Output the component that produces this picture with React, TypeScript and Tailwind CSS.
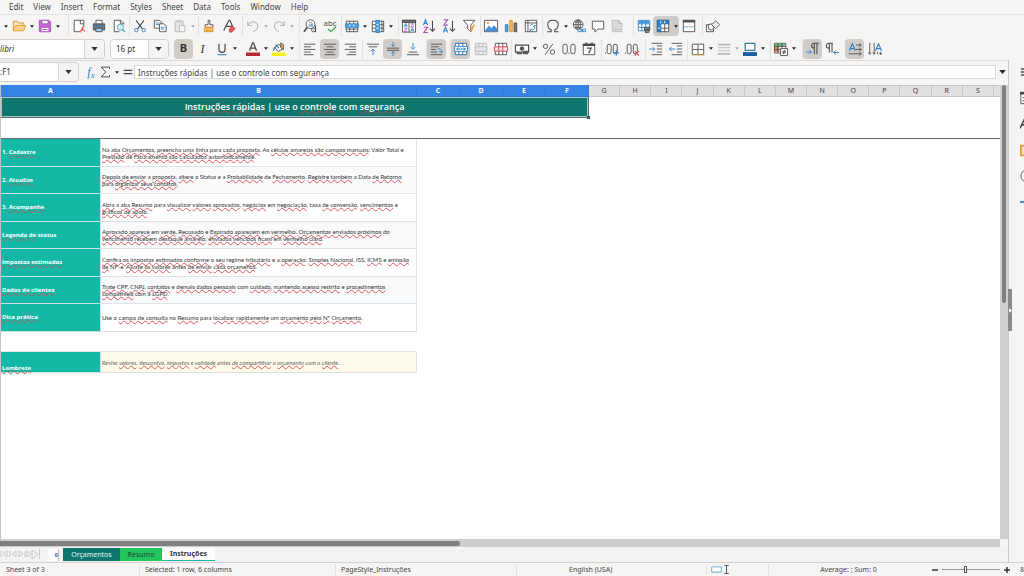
import type { ReactNode } from "react";

const INK = "#4a4a4a";
const BLUE = "#2f80c8";

type IconProps = { children: ReactNode; className?: string };

function Icon({ children, className = "size-[14px]" }: IconProps) {
  return (
    <svg
      viewBox="0 0 16 16"
      fill="none"
      stroke={INK}
      strokeWidth="1"
      className={`${className} shrink-0 overflow-visible`}
      aria-hidden="true"
    >
      {children}
    </svg>
  );
}

type ToolProps = {
  label: string;
  active?: boolean;
  faded?: boolean;
  menu?: boolean;
  children: ReactNode;
};

function Caret() {
  return (
    <svg viewBox="0 0 6 4" className="h-[3px] w-1" aria-hidden="true">
      <path d="M0 0h6L3 4z" fill="#222" />
    </svg>
  );
}

function Tool({ label, active, faded, menu, children }: ToolProps) {
  return (
    <span
      className={`flex h-5 shrink-0 items-center rounded-sm ${active ? "bg-[#d0ccc8]" : ""} ${
        faded ? "opacity-35" : ""
      }`}
    >
      <button type="button" aria-label={label} className="flex h-5 w-[19px] items-center justify-center">
        {children}
      </button>
      {menu ? (
        <button
          type="button"
          aria-label={`${label} options`}
          className="flex h-5 w-[7px] items-center justify-center"
        >
          <Caret />
        </button>
      ) : null}
    </span>
  );
}

function Group({ className, children }: { className: string; children: ReactNode }) {
  return (
    <div className={`flex h-5 shrink-0 items-center ${className}`}>
      {children}
    </div>
  );
}

type LettersProps = { text: string; x: number; y: number; size: number; color?: string };

function Letters({ text, x, y, size, color = INK }: LettersProps) {
  return (
    <text
      x={x}
      y={y}
      fontSize={size}
      fill={color}
      stroke="none"
      textAnchor="middle"
      fontFamily="'Noto Sans', sans-serif"
    >
      {text}
    </text>
  );
}

function StandardBar() {
  return (
    <div className="flex h-[23px] items-center overflow-hidden border-t border-[#e6e4e2] pl-[3px]">
      <Group className="w-[65px]">
        <span className="flex w-[6px] justify-center">
          <Caret />
        </span>
        <Tool label="Open" menu>
          <Icon>
            <path d="M1.500 13.500v-11h4.500l1.500 2h6v3" fill="#fbe3b5" stroke="#d99331" />
            <path d="M1.500 13.500l2.500-6h11.500l-2 6z" fill="#f9d08a" stroke="#e09a35" />
          </Icon>
        </Tool>
        <Tool label="Save" menu>
          <Icon>
            <path d="M1.500 1.500h11l2 2v11h-13z" fill="#c469cf" stroke="#a94fbd" />
            <path d="M4.500 1.500h7v4h-7zM3.500 9.500h9v5h-9z" fill="#fff" stroke="#a94fbd" />
            <path d="M5 12h6" stroke="#a94fbd" />
          </Icon>
        </Tool>
      </Group>
      <Group className="w-[61px] gap-px border-l border-[#e3e1df]">
        <Tool label="Export as PDF">
          <Icon>
            <path d="M13.500 9V1.500h-11v13h7" fill="#fff" />
            <path d="M9.500 1.500v4h4" />
            <path d="M12.500 8v4M9 15c2-1 3-4 2.500-5.500M9.500 12.500c2-.5 4 0 5.500 1.500" stroke="#dd5560" strokeWidth="1.300" />
          </Icon>
        </Tool>
        <Tool label="Print">
          <Icon>
            <path d="M4.500 5V1.500h7V5" fill="#fff" />
            <path d="M1.500 5.500h13v7h-13z" fill="#6b757e" />
            <path d="M3 8h10" stroke="#2f80c8" />
            <path d="M4.500 10.500h7v4h-7z" fill="#9ed0f2" />
          </Icon>
        </Tool>
        <Tool label="Print Preview">
          <Icon>
            <path d="M13.500 6V5L10 1.500H2.500v13h6M9.500 1.500v4h4" fill="#fff" />
            <circle cx="9.500" cy="9.500" r="3.500" fill="#d6f0f4" stroke="#51a8b5" />
            <path d="M12 12l3 3" stroke="#51a8b5" strokeWidth="1.500" />
          </Icon>
        </Tool>
      </Group>
      <Group className="w-[69px] gap-px border-l border-[#e3e1df]">
        <Tool label="Cut">
          <Icon>
            <path d="M3.500 1.500l7.500 10M12.500 1.500L5 11.500" strokeWidth="1.200" />
            <circle cx="3.800" cy="12.700" r="2" stroke={BLUE} />
            <circle cx="12.200" cy="12.700" r="2" stroke={BLUE} />
          </Icon>
        </Tool>
        <Tool label="Copy">
          <Icon>
            <path d="M1.500 1.500h6l2 2v7h-8z" fill="#fff" />
            <path d="M3 4.500h4M3 6.500h4" stroke={BLUE} />
            <path d="M7.500 5.500h5l2.500 2.500v6.500H7.500z" fill="#fff" />
            <path d="M9 9.500h4M9 11.500h4" stroke={BLUE} />
          </Icon>
        </Tool>
        <Tool label="Paste" faded menu>
          <Icon>
            <path d="M2.500 2.500h9v12h-9z" fill="#c9c7c5" />
            <path d="M5 1.500h4v2H5z" fill="#fff" />
            <path d="M7.500 7.500h6v7h-6z" fill="#fff" />
          </Icon>
        </Tool>
      </Group>
      <Group className="w-11 gap-px border-l border-[#e3e1df]">
        <Tool label="Clone Formatting">
          <Icon>
            <path d="M7 1.500h2v5h3.500v3h-9v-3H7z" fill="#fff" />
            <path d="M3.500 9.500h9v5h-10z" fill="#f6bd5d" stroke="#da922b" />
            <path d="M6 12v2.500M9 12v2.500" stroke="#da922b" />
          </Icon>
        </Tool>
        <Tool label="Clear Direct Formatting">
          <Icon>
            <path d="M2 13L8 1.500h1l3.500 8M4.500 8.500h7" strokeWidth="1.300" />
            <path d="M8 12l4-4 3 3-4 4H9z" fill="#e5525d" stroke="#d13d49" />
          </Icon>
        </Tool>
      </Group>
      <Group className="w-[57px] border-l border-[#e3e1df]">
        <Tool label="Undo" faded menu>
          <Icon>
            <path d="M2 2.500v5h5M2.500 7c2-4 6-5 9-2.500 3.500 3 2 8-3.500 10" strokeWidth="1.200" />
          </Icon>
        </Tool>
        <Tool label="Redo" faded menu>
          <Icon>
            <path d="M14 2.500v5H9M13.500 7c-2-4-6-5-9-2.500-3.500 3-2 8 3.500 10" strokeWidth="1.200" />
          </Icon>
        </Tool>
      </Group>
      <Group className="w-[42px] gap-px border-l border-[#e3e1df]">
        <Tool label="Find and Replace">
          <Icon>
            <circle cx="8.500" cy="6" r="5" fill="#fff" />
            <path d="M5 9.500l-4 5" strokeWidth="1.800" />
            <path d="M7 4.500c2.500-1.500 3.500 0 3.500 1.500v2.500M10.500 6.500c-3 0-4 .5-3.500 1.500.5 1 3 .5 3.500-.5" stroke={BLUE} />
            <circle cx="12" cy="12.500" r="2.200" fill="#f6f5f3" />
            <path d="M14.300 7.500V15" strokeWidth="1.200" />
          </Icon>
        </Tool>
        <Tool label="Spelling">
          <Icon>
            <Letters text="abc" x={8} y={8} size={9} />
            <path d="M6 11.500l3 3 6-6" stroke="#3aa757" strokeWidth="1.500" />
          </Icon>
        </Tool>
      </Group>
      <Group className="w-[57px] border-l border-[#e3e1df]">
        <Tool label="Row" menu>
          <Icon>
            <path d="M1.500 2.500h13v12h-13zM5.500 2.500v12M10 2.500v12M1.500 11.500h13" fill="#fff" />
            <path d="M.5 5.500h15v4H.5z" fill="#4b9fe0" stroke={BLUE} />
            <path d="M5.500 6v3M10 6v3" stroke="#fff" />
          </Icon>
        </Tool>
        <Tool label="Column" menu>
          <Icon>
            <path d="M1.500 2.500h13v12h-13zM1.500 6.500h13M1.500 10.500h13M12.500 2.500v12" fill="#fff" />
            <path d="M5.500 1.500h4v14h-4z" fill="#4b9fe0" stroke={BLUE} />
            <path d="M6 6.500h3M6 10.500h3" stroke="#fff" />
          </Icon>
        </Tool>
      </Group>
      <Group className="w-[82px] gap-px border-l border-[#e3e1df]">
        <Tool label="Sort">
          <Icon>
            <path d="M.5 1.500h15v13.500H.5zM8 4v11" fill="#fff" />
            <path d="M.5 1.500h15V4H.5z" fill="#777" />
            <path d="M2.500 9l1.800-4L6 9M3 7.800h2.600M10 14l1.800-4 1.700 4M10.500 12.800h2.600" stroke={BLUE} />
            <path d="M2.500 10.500h3.300l-3.300 3.500h3.500M10 5.500h3.300L10 9h3.500" stroke="#b14fc0" />
          </Icon>
        </Tool>
        <Tool label="Sort Ascending">
          <Icon>
            <path d="M1.500 7L4 .8 6.500 7M2.300 5h3.400" stroke={BLUE} strokeWidth="1.200" />
            <path d="M2 9.500h4.500L2 15.500h4.800" stroke="#b14fc0" strokeWidth="1.200" />
            <path d="M12 2v12M9 11l3 3 3-3" strokeWidth="1.200" />
          </Icon>
        </Tool>
        <Tool label="Sort Descending">
          <Icon>
            <path d="M2 1h4.500L2 7h4.800" stroke="#b14fc0" strokeWidth="1.200" />
            <path d="M1.500 15.500L4 9.300l2.500 6.200M2.300 13.500h3.400" stroke={BLUE} strokeWidth="1.200" />
            <path d="M12 2v12M9 11l3 3 3-3" strokeWidth="1.200" />
          </Icon>
        </Tool>
        <Tool label="AutoFilter">
          <Icon>
            <path d="M1.500 1.500h13L10 7v7.500L6.500 11V7z" fill="#fff" />
            <path d="M10 14.500l4-8" stroke="#eba23d" strokeWidth="2" />
          </Icon>
        </Tool>
      </Group>
      <Group className="w-[62px] gap-px border-l border-[#e3e1df]">
        <Tool label="Insert Image">
          <Icon>
            <path d="M.5 1.500h15v13H.5z" fill="#fff" />
            <path d="M1 13.500l4.500-6 3 3 3-3.500 3.500 4v3H1z" fill="#3f93d8" stroke="none" />
            <circle cx="4.500" cy="4.500" r="1.500" fill="#f3b04d" stroke="none" />
          </Icon>
        </Tool>
        <Tool label="Insert Chart">
          <Icon>
            <path d="M1.500 6.500h3v8h-3z" fill="#4b9fe0" stroke={BLUE} />
            <path d="M6.500 1.500h3v13h-3z" fill="#f5b85a" stroke="#da922b" />
            <path d="M11.500 4.500h3v10h-3z" fill="#777" />
          </Icon>
        </Tool>
        <Tool label="Pivot Table">
          <Icon>
            <path d="M1.500 1.500h13v13h-13zM1.500 4.500h13M4.500 1.500v13" fill="#fff" />
            <path d="M6.500 12.500h3c2 0 3-2 3-5M10.500 9l2-2 2 2M8.500 10.500l-2 2 2 2M7 8c0-1 1-2 3-2" stroke={BLUE} />
          </Icon>
        </Tool>
      </Group>
      <Group className="w-[91px] border-l border-[#e3e1df]">
        <Tool label="Special Character" menu>
          <Icon>
            <path d="M1.500 14.500H6v-2C3 11 2 9 2 6.500c0-3 2.500-5 6-5s6 2 6 5c0 2.500-1 4.500-4 6v2h4.500" strokeWidth="1.200" />
          </Icon>
        </Tool>
        <Tool label="Insert Hyperlink">
          <Icon>
            <circle cx="7" cy="6.500" r="5.500" fill="#fff" />
            <path d="M1.500 6.500h11M7 1v11M3 3.500h8M3 9.500h8" />
            <ellipse cx="7" cy="6.500" rx="2.500" ry="5.500" />
            <path d="M7 11.500h3.500v3H7zM12 11.500h3.500v3H12zM10 13h3" fill="#f6f5f3" stroke={BLUE} />
          </Icon>
        </Tool>
        <Tool label="Insert Comment">
          <Icon>
            <path d="M1.500 2.500h13v9H8L4.500 15v-3.500h-3z" fill="#fff" />
          </Icon>
        </Tool>
        <Tool label="Headers and Footers" faded>
          <Icon>
            <path d="M2.500 1.500H10L13.500 5v9.500h-11z" fill="#aaa" />
            <path d="M4 12h8M9.500 1.500V5h4" />
          </Icon>
        </Tool>
      </Group>
      <Group className="w-[69px] border-l border-[#e3e1df]">
        <Tool label="Define Print Area">
          <Icon>
            <path d="M1.500 1.500h13v12h-13z" fill="#fff" stroke={BLUE} />
            <path d="M2 2h12v3H2z" fill="#4b9fe0" stroke="none" />
            <path d="M1.500 5.500h13M1.500 9.500h13M5.500 1.500v12M10 1.500v12" stroke={BLUE} />
            <path d="M8.500 9.500h6v3h-6zM9.500 12.500h4v3h-4z" fill="#888" />
          </Icon>
        </Tool>
        <Tool label="Freeze Rows and Columns" active menu>
          <Icon>
            <path d="M1.500 1.500h13v13h-13zM5.500 10.500h9M10 5v9.500" fill="#fff" />
            <path d="M1.500 1.500h13v4h-9v9h-4z" fill="#2f80c8" stroke="#2369a8" />
            <path d="M5.500 2v3M10 2v3M2 10.500h3" stroke="#fff" />
          </Icon>
        </Tool>
        <Tool label="Split Window">
          <Icon>
            <path d="M1.500 1.500h13v13h-13z" fill="#fff" />
            <path d="M1 1h14v3H1z" fill="#555" stroke="none" />
            <path d="M2 9h12" stroke={BLUE} strokeDasharray="2 1" />
          </Icon>
        </Tool>
      </Group>
      <Group className="border-l border-[#e3e1df]">
        <Tool label="Show Draw Functions">
          <Icon>
            <path d="M.5 6.500h8v8h-8z" />
            <circle cx="6" cy="9" r="3.500" fill="#f6f5f3" />
            <path d="M11 2l4.500 4.500L11 11 6.500 6.500z" fill="#f6f5f3" />
          </Icon>
        </Tool>
      </Group>
    </div>
  );
}

type ComboProps = { label: string; value: string; box: string; text: string };

function Combo({ label, value, box, text }: ComboProps) {
  return (
    <div className={`flex h-5 shrink-0 overflow-hidden border border-[#d3d0cd] bg-white ${box}`}>
      <input
        aria-label={label}
        defaultValue={value}
        className={`min-w-0 flex-1 bg-white text-[#333] outline-none ${text}`}
      />
      <button
        type="button"
        aria-label={`${label} list`}
        className="flex w-5 items-center justify-center border-l border-[#d3d0cd] bg-[#f6f5f3]"
      >
        <svg viewBox="0 0 8 5" className="h-1 w-[7px]" aria-hidden="true">
          <path d="M0 0h8L4 5z" fill="#333" />
        </svg>
      </button>
    </div>
  );
}

function FormattingBar() {
  return (
    <div className="flex h-[23px] items-center overflow-hidden">
      <div className="flex w-[174px] shrink-0 gap-[5px]">
        <Combo label="Font Name" value="libri" box="w-[105px] rounded-r-sm border-l-0" text="text-[8px] italic" />
        <Combo label="Font Size" value="16 pt" box="w-[59px] rounded-sm" text="pl-[5px] text-[8px]" />
      </div>
      <Group className="w-[69px]">
        <Tool label="Bold" active>
          <span className="text-[11px] font-bold text-[#333]">B</span>
        </Tool>
        <Tool label="Italic">
          <span className="font-['Liberation_Serif',serif] text-[12px] italic text-[#333]">I</span>
        </Tool>
        <Tool label="Underline" menu>
          <Icon>
            <path d="M4.500 2v6c0 5 7 5 7 0V2" strokeWidth="1.400" />
            <path d="M3 14.500h10" stroke={BLUE} strokeWidth="1.200" />
          </Icon>
        </Tool>
      </Group>
      <Group className="w-14">
        <Tool label="Font Color" menu>
          <Icon>
            <path d="M4 10L7.500 1h1L12 10M5.500 7h5" strokeWidth="1.500" />
            <path d="M0 12h16v4H0z" fill="#b8292f" stroke="none" />
          </Icon>
        </Tool>
        <Tool label="Background Color" menu>
          <Icon>
            <path d="M3 6l5-3.500L12 8l-5 3z" fill="#fff" />
            <path d="M2 10c0-3 1-4 2-4M4 3l4 4" stroke={BLUE} strokeWidth="1.300" />
            <path d="M10 1v5l3 3V3z" fill="#f0b04f" />
            <path d="M0 12h16v4H0z" fill="#fbee21" stroke="none" />
          </Icon>
        </Tool>
      </Group>
      <Group className="w-[63px] gap-px border-l border-[#e3e1df]">
        <Tool label="Align Left">
          <Icon>
            <path d="M1 2.500h13M1 5.500h8M1 8.500h13M1 11.500h8M1 14.500h11" />
          </Icon>
        </Tool>
        <Tool label="Center Horizontally" active>
          <Icon>
            <path d="M1 2.500h14M4 5.500h8M1 8.500h14M4 11.500h8M2 14.500h12" />
          </Icon>
        </Tool>
        <Tool label="Align Right">
          <Icon>
            <path d="M2 2.500h13M7 5.500h8M2 8.500h13M7 11.500h8M4 14.500h11" />
          </Icon>
        </Tool>
      </Group>
      <Group className="w-16 gap-px border-l border-[#e3e1df]">
        <Tool label="Align Top">
          <Icon>
            <path d="M1 2.500h14M3 5.500h10" />
            <path d="M8 15V8M5.500 10.500L8 8l2.500 2.500" stroke={BLUE} />
          </Icon>
        </Tool>
        <Tool label="Center Vertically" active>
          <Icon>
            <path d="M1 7h14M1 9.500h14" />
            <path d="M8 0v5M6 3l2 2 2-2M8 16v-5M6 13l2-2 2 2" stroke={BLUE} />
          </Icon>
        </Tool>
        <Tool label="Align Bottom">
          <Icon>
            <path d="M3 11.500h10M1 14.500h14" />
            <path d="M8 1v7M5.500 6L8 8.500 10.500 6" stroke={BLUE} />
          </Icon>
        </Tool>
      </Group>
      <Group className="w-6 border-l border-[#e3e1df]">
        <Tool label="Wrap Text" active>
          <Icon>
            <path d="M1 2.500h13M1 5.500h9M1 8.500h6M1 11.500h7M1 14.500h13" />
            <path d="M9 7.500c3 0 4 1 4 4.500M10.500 10.500l2.500 2 2-2.500" stroke={BLUE} />
          </Icon>
        </Tool>
      </Group>
      <Group className="w-[61px] gap-px border-l border-[#e3e1df]">
        <Tool label="Merge and Center Cells" active>
          <Icon>
            <path d="M1.500 1.500h13v13h-13zM5.500 1.500v13M10 1.500v13" fill="#fff" stroke="#2369a8" />
            <path d="M.5 5h15v6H.5z" fill="#e8f3fc" stroke={BLUE} />
            <path d="M3 8h10M5 6.500L3 8l2 1.500M11 6.500L13 8l-2 1.500" stroke={BLUE} />
          </Icon>
        </Tool>
        <Tool label="Merge Cells" faded>
          <Icon>
            <path d="M1.500 1.500h13v13h-13zM5.500 1.500v13M10 1.500v13" fill="#ddd" />
            <path d="M1.500 5.500h13v5h-13z" fill="#ccc" />
          </Icon>
        </Tool>
        <Tool label="Unmerge Cells">
          <Icon>
            <path d="M1.500 1.500h13v13h-13zM5.500 1.500v13M10 1.500v13" fill="#fff" />
            <path d="M.5 5.500h15v5H.5zM5.500 5.500v5M10 5.500v5" fill="#fbdfe1" stroke="#d9434f" />
          </Icon>
        </Tool>
      </Group>
      <Group className="w-[90px] gap-px border-l border-[#e3e1df]">
        <Tool label="Format as Currency" menu>
          <Icon>
            <path d="M.5 3.500h15v8H.5z" fill="#fff" strokeWidth="1.300" />
            <circle cx="8" cy="7.500" r="2" fill="#555" />
            <path d="M9 10h6v4H9zM2 12h6v2H2z" fill="#555" stroke="none" />
          </Icon>
        </Tool>
        <Tool label="Format as Percent">
          <Icon>
            <circle cx="4" cy="5" r="2.500" />
            <circle cx="12" cy="11.500" r="2.500" />
            <path d="M12.500 2L3.500 14.500" />
          </Icon>
        </Tool>
        <Tool label="Format as Number">
          <Icon>
            <rect x="1" y="2.500" width="5" height="11" rx="2.500" />
            <rect x="10" y="2.500" width="5" height="11" rx="2.500" />
            <path d="M8 12v1.500" />
          </Icon>
        </Tool>
        <Tool label="Format as Date">
          <Icon>
            <path d="M1.500 2.500h13v12h-13z" fill="#fff" />
            <path d="M1 2h14v2.500H1zM4 .5h1.500V2H4zM10.500.5H12V2h-1.500z" fill={INK} stroke="none" />
            <path d="M5.500 7h5l-3 6" strokeWidth="1.300" />
          </Icon>
        </Tool>
      </Group>
      <Group className="w-11 gap-px border-l border-[#e3e1df]">
        <Tool label="Add Decimal Place">
          <Icon>
            <rect x="2.500" y="2.500" width="4.500" height="11" rx="2.200" />
            <rect x="9.500" y="2.500" width="4.500" height="11" rx="2.200" />
            <path d="M.5 12v1.500" />
            <path d="M13 9.500v6M10 12.500h6" stroke={BLUE} strokeWidth="1.400" />
          </Icon>
        </Tool>
        <Tool label="Delete Decimal Place">
          <Icon>
            <rect x="2.500" y="2.500" width="4.500" height="11" rx="2.200" />
            <rect x="9.500" y="2.500" width="4.500" height="11" rx="2.200" />
            <path d="M.5 12v1.500" />
            <path d="M11 10.500l5 5M16 10.500l-5 5" stroke="#d9434f" strokeWidth="1.300" />
          </Icon>
        </Tool>
      </Group>
      <Group className="w-[42px] gap-px border-l border-[#e3e1df]">
        <Tool label="Increase Indent">
          <Icon>
            <path d="M3 1.500h12M9 4.500h6M9 8h6M9 11.500h6M3 14.500h12" />
            <path d="M0 8h6.500M4 5.500L6.500 8 4 10.500" stroke={BLUE} />
          </Icon>
        </Tool>
        <Tool label="Decrease Indent">
          <Icon>
            <path d="M3 1.500h12M9 4.500h6M9 8h6M9 11.500h6M3 14.500h12" />
            <path d="M7 8H.5M3 5.500L.5 8 3 10.500" stroke={BLUE} />
          </Icon>
        </Tool>
      </Group>
      <Group className="w-[83px] border-l border-[#e3e1df]">
        <Tool label="Borders" menu>
          <Icon>
            <path d="M1.500 2.500h13v12h-13z" fill="#fff" />
            <path d="M8 3v11M2 8.500h12" />
            <path d="M1 14.500h14" stroke="#d99331" />
          </Icon>
        </Tool>
        <Tool label="Border Style" faded menu>
          <Icon>
            <path d="M1 3h14M1 13.500h14" strokeWidth="2" />
            <path d="M1 6.500h14M1 10h14" />
          </Icon>
        </Tool>
        <Tool label="Border Color" menu>
          <Icon>
            <path d="M2.500 1.500h11v8h-11z" fill="#fff" stroke="#3f7f9e" strokeWidth="1.500" />
            <path d="M0 11.500h16V16H0z" fill="#1f5fa8" stroke="none" />
          </Icon>
        </Tool>
      </Group>
      <Group className="w-8 border-l border-[#e3e1df]">
        <Tool label="Conditional Formatting" menu>
          <Icon>
            <path d="M.5 1.500h13v11H.5z" fill="#fff" />
            <path d="M1 2h12v3H1z" fill="#6cc08b" stroke="none" />
            <path d="M1 5h5v7H1z" fill="#e8875c" stroke="none" />
            <path d="M.5 5h13M.5 8.500h13M4.500 1.500v11M9 1.500v11" />
            <path d="M7.500 7.500h8v8h-8z" fill="#fff" />
            <path d="M9.500 10.500h4M9.500 12.500h4M12.500 9l-2 5" />
          </Icon>
        </Tool>
      </Group>
      <Group className="w-[43px] border-l border-[#e3e1df]">
        <Tool label="Left-To-Right" active>
          <Icon>
            <path d="M15 1.500H9.500c-4 0-4 5.500 0 5.500M9.500 1.500V14M12.500 1.500V14" strokeWidth="1.200" />
            <path d="M0 11.500h6M3.500 9L6 11.500 3.500 14" stroke={BLUE} />
          </Icon>
        </Tool>
        <Tool label="Right-To-Left">
          <Icon>
            <path d="M9 1.500H4.500c-4 0-4 5.500 0 5.500M5 1.500V12M8 1.500V12" strokeWidth="1.200" />
            <path d="M16 12h-6M12.500 9.500L10 12l2.500 2.500" stroke={BLUE} />
          </Icon>
        </Tool>
      </Group>
      <Group className="gap-px">
        <Tool label="Text direction from left to right" active>
          <Icon>
            <path d="M1.500 10L5 2l3.500 8M2.500 7.500h5" stroke={BLUE} strokeWidth="1.300" />
            <path d="M1 13.500h14M13 11.500l2 2-2 2M9 3.500h6M13 1.500l2 2-2 2M9 8.500h6M13 6.500l2 2-2 2" />
          </Icon>
        </Tool>
        <Tool label="Text direction from top to bottom">
          <Icon>
            <path d="M2 1v13M.5 12L2 14l1.500-2M7 1v13M5.500 12L7 14l1.500-2M11 11v3M14.500 11v3M13 12.500l1.500 2 1.500-2" />
            <path d="M8.500 10L12 2l3.500 8M10 7.500h4" stroke={BLUE} strokeWidth="1.300" />
          </Icon>
        </Tool>
      </Group>
    </div>
  );
}

function FormulaBar() {
  return (
    <div className="flex h-[25px] shrink-0 items-center border-t border-[#dddbd9] pb-[2px]">
      <Combo label="Name Box" value=":F1" box="w-[79px] rounded-r-sm border-l-0" text="text-[8px]" />
      <button
        type="button"
        aria-label="Function Wizard"
        className="ml-1 w-4 text-center font-['Liberation_Serif',serif] text-[12px] leading-4 italic text-[#2f80c8]"
      >
        f<sub className="text-[9px]">x</sub>
      </button>
      <button type="button" aria-label="Select Function" className="flex w-[22px] items-center gap-1">
        <Icon className="size-3">
          <path d="M14 4V1.500H3L9 8l-6 6.500h11V12" strokeWidth="1.300" />
        </Icon>
        <Caret />
      </button>
      <button type="button" aria-label="Formula" className="flex w-[13px] justify-center">
        <Icon className="size-[10px]">
          <path d="M1 5.500h14M1 10.500h14" strokeWidth="2" />
        </Icon>
      </button>
      <input
        aria-label="Formula input"
        defaultValue="Instruções rápidas | use o controle com segurança"
        className="h-[14px] min-w-0 flex-1 border border-[#dcdad8] bg-white pl-[3px] text-[8px] text-[#444] outline-none"
      />
      <button type="button" aria-label="Expand Formula Bar" className="flex w-3 justify-center">
        <svg viewBox="0 0 8 5" className="h-1 w-[7px]" aria-hidden="true">
          <path d="M0 0h8L4 5z" fill="#222" />
        </svg>
      </button>
    </div>
  );
}

// words inside [] are flagged by the spell checker
const rows = [
  {
    title: "1. [Cadastre]",
    lines: [
      "Na [aba] [Orçamentos], [preencha uma linha] para [cada proposta]. As [células amarelas são campos manuais]: Valor Total e",
      "[Previsão] de [Faturamento são calculados automaticamente].",
    ],
  },
  {
    title: "2. [Atualize]",
    lines: [
      "[Depois de enviar] a [proposta], [altere] o Status e a [Probabilidade] de [Fechamento]. [Registre também] a Data [de Retorno]",
      "para [organizar seus contatos].",
    ],
  },
  {
    title: "3. [Acompanhe]",
    lines: [
      "[Abra] a [aba Resumo] para [visualizar] [valores] [aprovados], [negócios] em [negociação], taxa [de conversão], [vencimentos] e",
      "[gráficos de apoio].",
    ],
  },
  {
    title: "[Legenda de] status",
    lines: [
      "[Aprovado aparece] em [verde], [Recusado] e [Expirado aparecem] em [vermelho]. [Orçamentos enviados próximos] do",
      "[vencimento recebem] [destaque amarelo]; [enviados vencidos ficam] em [vermelho claro].",
    ],
  },
  {
    title: "[Impostos estimados]",
    lines: [
      "[Confira os impostos estimados conforme] o [seu] regime [tributário] e a [operação]: [Simples Nacional], ISS, [ICMS] e [emissão]",
      "[de] NF-e. [Ajuste os valores] antes [de enviar] [cada orçamento].",
    ],
  },
  {
    title: "[Dados de clientes]",
    lines: [
      "[Trate] [CPF], [CNPJ], [contatos] e [demais dados pessoais] com [cuidado], [mantendo acesso restrito] e [procedimentos]",
      "[compatíveis] com a [LGPD].",
    ],
  },
  {
    title: "[Dica prática]",
    lines: ["Use o [campo de consulta] no [Resumo] para [localizar rapidamente] um [orçamento] [pelo] [Nº] [Orçamento]."],
  },
];

const spareColumns = ["G", "H", "I", "J", "K", "L", "M", "N", "O", "P", "Q", "R", "S"];

function Spelled({ text, line = "decoration-[#e0525a]" }: { text: string; line?: string }) {
  return (
    <>
      {text.split(/[[\]]/).map((part, i) =>
        i % 2 ? (
          <span
            key={i}
            className={`underline decoration-wavy decoration-1 underline-offset-0 [text-decoration-skip-ink:none] ${line}`}
          >
            {part}
          </span>
        ) : (
          part
        ),
      )}
    </>
  );
}

function Sheet() {
  return (
    <table className="w-full table-fixed border-separate border-spacing-0">
      <colgroup>
        <col className="w-[100px]" />
        <col className="w-[316px]" />
        <col className="w-[43px]" />
        <col className="w-[43px]" />
        <col className="w-[43px]" />
        <col className="w-[43px]" />
        {spareColumns.map((name) => (
          <col key={name} />
        ))}
        <col className="w-[6px]" />
      </colgroup>
      <thead>
        <tr className="h-3 text-[7px] leading-[10px]">
          {["A", "B", "C", "D", "E", "F"].map((name) => (
            <th key={name} className="border-r border-b border-[#3178d2] bg-[#3584e4] p-0 font-bold text-white">
              {name}
            </th>
          ))}
          {spareColumns.map((name) => (
            <th
              key={name}
              className="border-t border-r border-b border-[#c9c7c5] bg-[#e2e0de] p-0 font-normal text-[#444]"
            >
              {name}
            </th>
          ))}
          <th className="border-t border-b border-[#c9c7c5] bg-[#e2e0de] p-0" />
        </tr>
      </thead>
      <tbody>
        <tr className="h-[21px]">
          <td
            colSpan={6}
            className="relative border-r border-b border-[#4f6f74] bg-[#0f766e] p-0 text-center font-['Open_Sans',sans-serif] text-[9px] leading-[18px] font-semibold text-white"
          >
            <div className="h-5 border border-[#a9c4c4]">
              <Spelled
                text="[Instruções rápidas] | use o [controle] com [segurança]"
                line="decoration-[#b8484c]"
              />
            </div>
            <span className="absolute -right-[2px] -bottom-[2px] size-[3px] bg-[#39565c]" />
          </td>
          <td colSpan={14} className="p-0" />
        </tr>
        <tr className="h-[21px]">
          <td colSpan={20} className="border-b border-[#6a6a6a] p-0" />
        </tr>
        {rows.map((row, i) => (
          <tr key={row.title} className={i % 2 ? "h-[27px]" : "h-7"}>
            <th
              scope="row"
              className="border-r border-b border-[#cbe3e3] bg-[#14b8a6] p-0 pl-px text-left font-['Open_Sans',sans-serif] text-[6px] leading-[7px] font-bold text-white"
            >
              <Spelled text={row.title} line="decoration-[#a8605f]" />
            </th>
            <td
              className={`border-r border-b border-[#dde3e8] p-0 pl-px font-['Lato',sans-serif] text-[6px] leading-[7px] whitespace-nowrap text-[#333] ${
                i % 2 ? "bg-[#f8fafc]" : "bg-white"
              }`}
            >
              {row.lines.map((line) => (
                <div key={line}>
                  <Spelled text={line} />
                </div>
              ))}
            </td>
            <td colSpan={18} className="p-0" />
          </tr>
        ))}
        <tr className="h-5">
          <td colSpan={2} className="border-b border-[#e3e6e8] p-0" />
        </tr>
        <tr className="h-[21px]">
          <th
            scope="row"
            className="border-r border-b border-[#cbe3e3] bg-[#14b8a6] p-0 pl-px text-left align-bottom font-['Open_Sans',sans-serif] text-[6px] leading-[7px] font-bold text-white"
          >
            <Spelled text="[Lembrete]" line="decoration-[#a8605f]" />
          </th>
          <td className="border-r border-b border-[#e3e2d8] bg-[#fffbeb] p-0 pl-px font-['Lato',sans-serif] text-[6px] leading-[7px] whitespace-nowrap italic text-[#666]">
            <Spelled text="Revise [valores], [descontos], [impostos] e [validade] antes [de compartilhar] o [orçamento] com o [cliente]." />
          </td>
        </tr>
      </tbody>
    </table>
  );
}

function Sidebar() {
  return (
    <aside className="relative flex w-4 shrink-0 flex-col items-start border-l border-[#c9c7c5] pt-[5px] pl-[11px]">
      <div className="flex w-1 flex-col gap-3 overflow-hidden">
        <Icon>
          <path d="M1 4.500h14M1 8h14M1 11.500h14" strokeWidth="1.600" />
        </Icon>
        <Icon>
          <path d="M1 1.500h14v13H1z" fill="#fff" />
          <path d="M0 1h16v3H0z" fill={INK} stroke="none" />
          <path d="M3 7.500h10M3 11h10" />
        </Icon>
        <Icon>
          <path d="M0 13L5.500 1.500 11 13M2 9h7" strokeWidth="1.800" />
        </Icon>
        <Icon>
          <path d="M1 3h14v11H1z" fill="#fbe3b5" stroke="#e09a35" strokeWidth="2" />
        </Icon>
        <Icon>
          <circle cx="8" cy="8" r="7" />
        </Icon>
        <Icon>
          <path d="M0 8h16" stroke={BLUE} strokeWidth="2" />
        </Icon>
      </div>
      <button
        type="button"
        aria-label="Hide sidebar"
        className="absolute top-[229px] -left-px flex h-[42px] w-1 items-center justify-center bg-[#8a8a8a]"
      >
        <svg viewBox="0 0 4 6" className="h-[5px] w-[3px]" aria-hidden="true">
          <path d="M0 0l4 3-4 3z" fill="#fff" />
        </svg>
      </button>
    </aside>
  );
}

function SheetTabs() {
  return (
    <div className="flex h-[15px] shrink-0 items-start bg-[#f4f3f1] pt-px text-[7px] leading-[12px]">
      <div className="flex w-12 shrink-0 items-center opacity-25">
        <svg viewBox="0 0 42 12" className="h-3 w-[42px]" fill="none" stroke="#555" aria-hidden="true">
          <path d="M1 3v6M7 3L3 6l4 3zM10 3v6M16 3l-4 3 4 3zM19 3v6l4-3zM25 3v6M27 3v6l4-3zM32 2l6 4-6 5zM39.500 1v10" />
        </svg>
      </div>
      <button type="button" aria-label="Add sheet" className="flex h-[13px] w-[15px] shrink-0 items-center">
        <span className="flex h-3 w-[11px] items-center justify-end border-r border-[#bbb] bg-white text-[6px] font-bold text-[#2f6fae]">
          0
        </span>
      </button>
      <button type="button" className="h-[13px] w-[57px] bg-[#0f766e] text-[#e6f3f1]">
        Orçamentos
      </button>
      <button type="button" className="h-[13px] w-[42px] bg-[#22c55e] text-[#174a2a]">
        Resumo
      </button>
      <button type="button" className="h-[13px] w-[53px] border-b border-[#14b8a6] bg-white font-bold text-[#333]">
        Instruções
      </button>
    </div>
  );
}

function StatusBar() {
  return (
    <footer className="flex h-[14px] shrink-0 items-center overflow-hidden border-t border-[#d3d1cf] text-[7px] leading-[12px] whitespace-nowrap">
      <span className="w-[139px] pl-[6px]">Sheet 3 of 3</span>
      <span className="w-[196px] border-l border-[#e3e1df] pl-[5px]">Selected: 1 row, 6 columns</span>
      <span className="w-[181px] border-l border-[#e3e1df] pl-[5px]">PageStyle_Instruções</span>
      <span className="flex-1 border-l border-[#e3e1df] pl-[52px]">English (USA)</span>
      <span className="flex w-[62px] items-center gap-[2px] border-l border-[#e3e1df] pl-1">
        <svg viewBox="0 0 12 8" className="h-[7px] w-[11px]" aria-hidden="true">
          <path d="M.5 1h11v6H.5z" fill="#fff" stroke="#5aa5c8" />
        </svg>
        <svg viewBox="0 0 5 10" className="h-[9px] w-[5px]" fill="none" stroke="#444" aria-hidden="true">
          <path d="M0 .5h5M0 9.500h5M2.500.5v9" />
        </svg>
      </span>
      <span className="w-[160px] border-l border-[#e3e1df] text-center">Average: ; Sum: 0</span>
      <span className="flex w-[92px] items-center gap-1 pl-1">
        <button type="button" aria-label="Zoom out">
          <svg viewBox="0 0 6 6" className="size-[6px]" aria-hidden="true">
            <path d="M0 3h6" stroke="#333" strokeWidth="1.500" />
          </svg>
        </button>
        <input
          type="range"
          aria-label="Zoom"
          defaultValue={40}
          className="h-2 w-[58px] appearance-none bg-[linear-gradient(#999,#999)] bg-[length:100%_1px] bg-center bg-no-repeat [&::-webkit-slider-thumb]:h-[7px] [&::-webkit-slider-thumb]:w-[3px] [&::-webkit-slider-thumb]:appearance-none [&::-webkit-slider-thumb]:border [&::-webkit-slider-thumb]:border-[#555] [&::-webkit-slider-thumb]:bg-white"
        />
        <button type="button" aria-label="Zoom in">
          <svg viewBox="0 0 6 6" className="size-[6px]" aria-hidden="true">
            <path d="M0 3h6M3 0v6" stroke="#333" strokeWidth="1.500" />
          </svg>
        </button>
      </span>
      <span className="w-1">8</span>
    </footer>
  );
}

const menus = ["Edit", "View", "Insert", "Format", "Styles", "Sheet", "Data", "Tools", "Window", "Help"];

export default function App() {
  return (
    <div className="flex min-h-screen flex-col overflow-hidden bg-[#f6f5f3] font-['Noto_Sans',sans-serif] text-[#444]">
      <nav className="flex h-[14px] items-center gap-[10px] pl-[9px] text-[8px] leading-[14px]">
        {menus.map((name) => (
          <button key={name} type="button">
            {name}
          </button>
        ))}
      </nav>
      <StandardBar />
      <FormattingBar />
      <div className="flex flex-1">
        <main className="flex min-w-0 flex-1 flex-col">
          <FormulaBar />
          <div className="flex flex-1">
            <div className="min-w-0 flex-1 overflow-hidden border-l border-[#c4c2c0] bg-white">
              <Sheet />
            </div>
            <div className="w-2 shrink-0 bg-[#d0cfce] px-[2px]">
              <div className="h-[48%] rounded-full bg-[#808080]" />
            </div>
          </div>
          <div className="mr-2 h-[8px] shrink-0 border-t border-[#d0cfce] bg-[#cfcdcb] pt-px">
            <div className="h-[5px] w-[46%] rounded-r-full bg-[#808080]" />
          </div>
          <SheetTabs />
        </main>
        <Sidebar />
      </div>
      <StatusBar />
    </div>
  );
}
